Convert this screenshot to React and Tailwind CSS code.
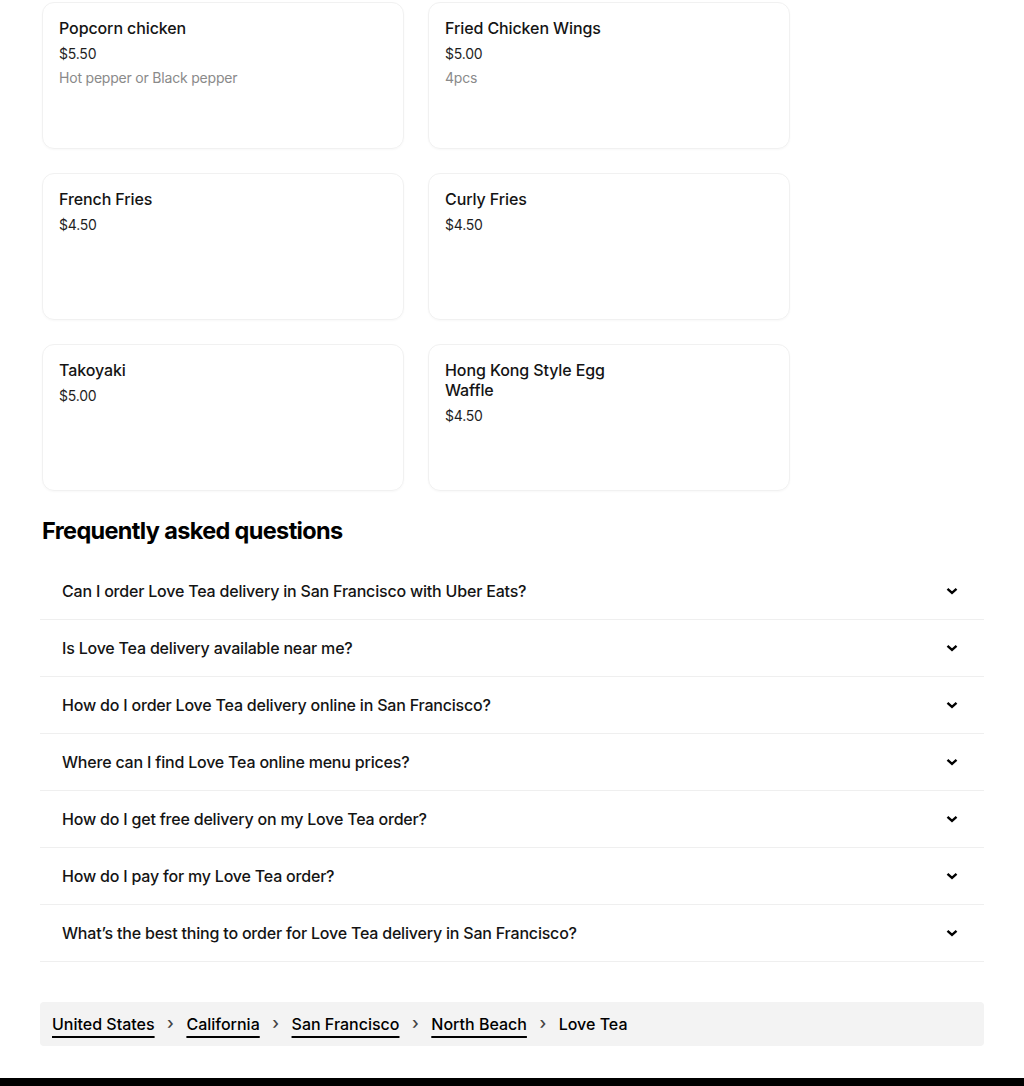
import React from "react";

const items = [
  { name: "Popcorn chicken", price: "$5.50", desc: "Hot pepper or Black pepper" },
  { name: "Fried Chicken Wings", price: "$5.00", desc: "4pcs" },
  { name: "French Fries", price: "$4.50" },
  { name: "Curly Fries", price: "$4.50" },
  { name: "Takoyaki", price: "$5.00" },
  { name: "Hong Kong Style Egg Waffle", price: "$4.50" },
];

const faqs = [
  "Can I order Love Tea delivery in San Francisco with Uber Eats?",
  "Is Love Tea delivery available near me?",
  "How do I order Love Tea delivery online in San Francisco?",
  "Where can I find Love Tea online menu prices?",
  "How do I get free delivery on my Love Tea order?",
  "How do I pay for my Love Tea order?",
  "What’s the best thing to order for Love Tea delivery in San Francisco?",
];

const crumbs = ["United States", "California", "San Francisco", "North Beach"];

const Chevron = () => (
  <svg width="12" height="8" viewBox="0 0 12 8" className="shrink-0">
    <path d="M1.5 1.8 6 5.8l4.5-4" fill="none" stroke="black" strokeWidth="2.4" />
  </svg>
);

const App = () => {
  return (
    <div className="bg-white text-black font-['Inter',sans-serif] min-h-[1086px] flex flex-col">
      <div className="px-[40px] pt-[2px]">
        {/* Menu cards */}
        <div className="grid grid-cols-2 gap-x-[24px] gap-y-[24px] w-[750px] pl-[2px]">
          {items.map((item) => (
            <div
              key={item.name}
              className="h-[147px] rounded-xl border border-[#f1f1f1] shadow-[0_1px_2px_rgba(0,0,0,0.03)] px-4 pt-[15px]"
            >
              <div className="max-w-[185px] text-[16px] leading-5 font-medium text-[#141414] tracking-[-0.1px]">
                {item.name}
              </div>
              <div className="mt-[6px] text-[14px] leading-5 text-[#1f1f1f] tracking-[-0.2px]">{item.price}</div>
              {item.desc && (
                <div className="mt-1 text-[14px] leading-5 text-[#8a8a8a] tracking-[-0.2px]">{item.desc}</div>
              )}
            </div>
          ))}
        </div>

        {/* FAQ */}
        <h2 className="mt-[24px] pl-[2px] text-[23.5px] leading-8 font-bold tracking-[-0.65px]">
          Frequently asked questions
        </h2>
        <div className="mt-4">
          {faqs.map((q) => (
            <div
              key={q}
              className="flex items-center justify-between border-b border-[#efefef] h-[57px] pl-[22px] pr-[26px]"
            >
              <span className="text-[16px] font-medium text-[#141414] tracking-[-0.2px]">{q}</span>
              <Chevron />
            </div>
          ))}
        </div>

        {/* Breadcrumbs */}
        <nav className="mt-10 mb-8 h-[44px] rounded bg-[#f3f3f3] flex items-center px-3 text-[16px] font-medium">
          {crumbs.map((c) => (
            <React.Fragment key={c}>
              <a href="#" className="underline decoration-[1.5px] underline-offset-[6px] text-black">
                {c}
              </a>
              <span className="mx-[12.5px] text-[17px] leading-none text-[#444] pb-[2px]">›</span>
            </React.Fragment>
          ))}
          <span>Love Tea</span>
        </nav>
      </div>
      <footer className="flex-1 bg-black"></footer>
    </div>
  );
};

export default App;
